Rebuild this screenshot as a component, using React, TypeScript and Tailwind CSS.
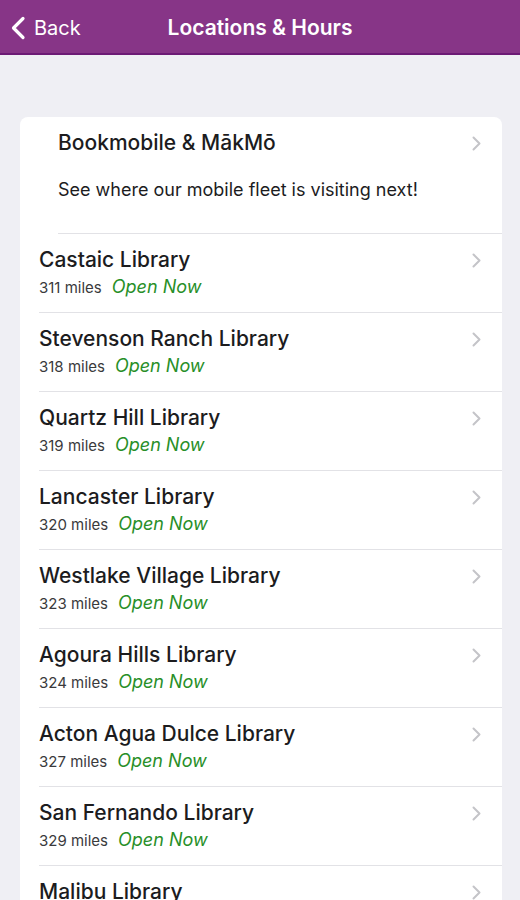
const libraries = [
  { name: "Castaic Library", miles: 311 },
  { name: "Stevenson Ranch Library", miles: 318 },
  { name: "Quartz Hill Library", miles: 319 },
  { name: "Lancaster Library", miles: 320 },
  { name: "Westlake Village Library", miles: 323 },
  { name: "Agoura Hills Library", miles: 324 },
  { name: "Acton Agua Dulce Library", miles: 327 },
  { name: "San Fernando Library", miles: 329 },
  { name: "Malibu Library", miles: 330 },
];

function Chevron() {
  return (
    <svg width="9" height="15" viewBox="0 0 9 15" className="shrink-0">
      <path d="M1.5 1.5 L7.5 7.5 L1.5 13.5" fill="none" stroke="#c4c4c8" strokeWidth="2" strokeLinecap="round" strokeLinejoin="round" />
    </svg>
  );
}

export default function App() {
  return (
    <div className="h-[900px] overflow-hidden bg-[#efeff4] font-['Inter','Liberation_Sans',sans-serif]">
      <header className="relative flex h-[55px] items-center border-b-2 border-[#6c1a75] bg-[#873587] text-white">
        <div className="flex items-center gap-[8px] pl-[10px] pt-[2px]">
          <svg width="16" height="24" viewBox="0 0 16 24">
            <path d="M13 2.5 L3.5 12 L13 21.5" fill="none" stroke="white" strokeWidth="3.2" strokeLinecap="round" strokeLinejoin="round" />
          </svg>
          <span className="text-[20px] leading-[24px]">Back</span>
        </div>
        <h1 className="pointer-events-none absolute left-0 right-0 pt-[2px] text-center text-[21px] font-semibold leading-[24px]">
          Locations &amp; Hours
        </h1>
      </header>

      <div className="mt-[62px] ml-[20px] mr-[18px] rounded-lg bg-white">
        <div className="pl-[38px]">
          <div className="flex items-center justify-between pr-[21px] pt-[14px]">
            <span className="text-[21px] font-medium leading-[24px] text-[#1c1c1e]">Bookmobile &amp; MākMō</span>
            <Chevron />
          </div>
          <p className="mt-[24px] pb-[32px] text-[18px] leading-[22px] text-[#1c1c1e]">
            See where our mobile fleet is visiting next!
          </p>
          <div className="h-px bg-[#e2e2e6]" />
        </div>

        {libraries.map((lib) => (
          <div key={lib.name} className="pl-[19px]">
            <div className="h-[78px] pt-[14px] pr-[21px]">
              <div className="flex items-center justify-between">
                <span className="text-[21px] font-medium leading-[24px] text-[#1c1c1e]">{lib.name}</span>
                <Chevron />
              </div>
              <div className="mt-[5px] flex h-[20px] items-baseline gap-[10px]">
                <span className="text-[15px] leading-[20px] text-[#3a3a3c]">{lib.miles} miles</span>
                <span className="text-[18px] italic leading-[20px] text-[#288f28]">Open Now</span>
              </div>
            </div>
            <div className="h-px bg-[#e2e2e6]" />
          </div>
        ))}
      </div>
    </div>
  );
}
